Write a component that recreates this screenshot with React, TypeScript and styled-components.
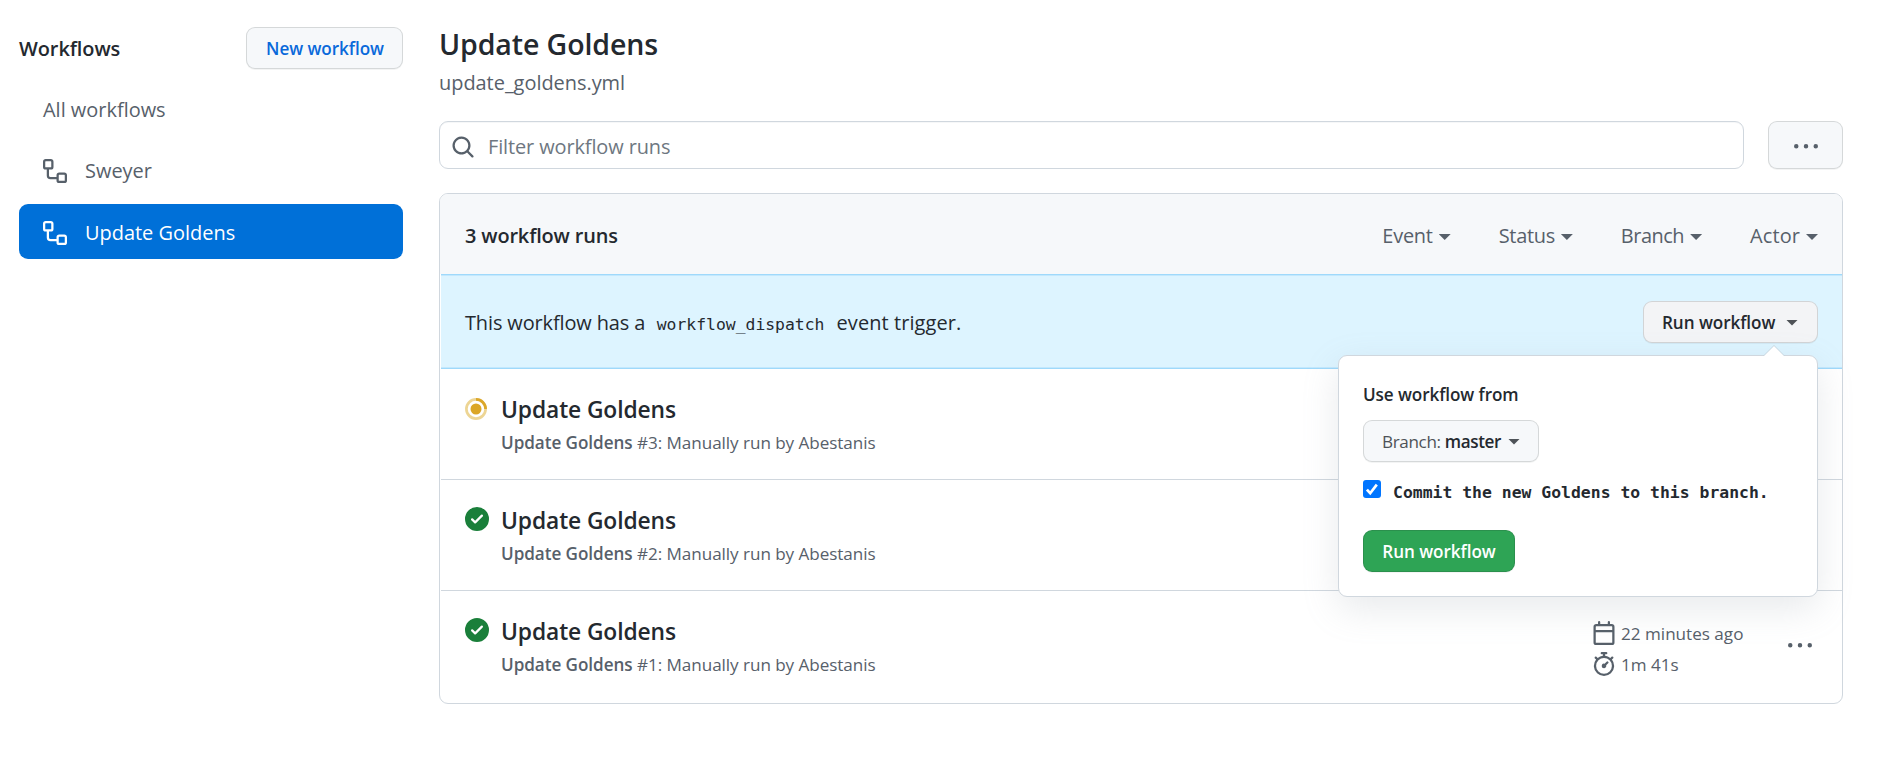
import React from "react";
import styled, { createGlobalStyle, css } from "styled-components";

const GlobalStyle = createGlobalStyle`
  *, *::before, *::after { box-sizing: border-box; }
  body {
    margin: 0;
    background: #fff;
    color: #24292f;
    font: 400 19.95px/27px "Open Sans", "Noto Sans", sans-serif;
    letter-spacing: -0.05px;
  }
  button { font: inherit; letter-spacing: inherit; color: inherit; margin: 0; }
  h1, h2, h3, p { margin: 0; }
`;

const muted = "#57606a";
const line = "#d0d7de";

/* ---------- icons ---------- */

const paths = {
  workflow:
    "M0 1.75C0 .784.784 0 1.75 0h3.5C6.216 0 7 .784 7 1.75v3.5A1.75 1.75 0 015.25 7H4v4a1 1 0 001 1h4v-1.25C9 9.784 9.784 9 10.75 9h3.5c.966 0 1.75.784 1.75 1.75v3.5A1.75 1.75 0 0114.25 16h-3.5A1.75 1.75 0 019 14.25v-.75H5A2.5 2.5 0 012.5 11V7h-.75A1.75 1.75 0 010 5.25v-3.5zm1.75-.25a.25.25 0 00-.25.25v3.5c0 .138.112.25.25.25h3.5a.25.25 0 00.25-.25v-3.5a.25.25 0 00-.25-.25h-3.5zm9 9a.25.25 0 00-.25.25v3.5c0 .138.112.25.25.25h3.5a.25.25 0 00.25-.25v-3.5a.25.25 0 00-.25-.25h-3.5z",
  search:
    "M11.5 7a4.499 4.499 0 11-8.998 0A4.499 4.499 0 0111.5 7zm-.82 4.74a6 6 0 111.06-1.06l3.04 3.04a.75.75 0 11-1.06 1.06l-3.04-3.04z",
  calendar:
    "M4.75 0a.75.75 0 01.75.75V2h5V.75a.75.75 0 011.5 0V2h1.25c.966 0 1.75.784 1.75 1.75v10.5A1.75 1.75 0 0113.25 16H2.75A1.75 1.75 0 011 14.25V3.75C1 2.784 1.784 2 2.75 2H4V.75A.75.75 0 014.75 0zm0 3.5h-2a.25.25 0 00-.25.25V6h11V3.75a.25.25 0 00-.25-.25H4.75zM2.5 7.5v6.75c0 .138.112.25.25.25h10.5a.25.25 0 00.25-.25V7.5h-11z",
  stopwatch:
    "M5.75.75A.75.75 0 016.5 0h3a.75.75 0 010 1.5h-.75v1l-.001.041a6.718 6.718 0 013.464 1.435l.007-.006.75-.75a.75.75 0 111.06 1.06l-.75.75-.006.007a6.75 6.75 0 11-10.548 0L2.72 5.03l-.75-.75a.75.75 0 011.06-1.06l.75.75.007.006A6.718 6.718 0 017.25 2.541a.756.756 0 010-.041v-1H6.5a.75.75 0 01-.75-.75zM8 14.5A5.25 5.25 0 108 4a5.25 5.25 0 000 10.5zm.389-6.7l1.33-1.33a.75.75 0 111.061 1.06L9.45 8.861A1.502 1.502 0 018 10.75a1.5 1.5 0 11.389-2.95z",
  success:
    "M8 16A8 8 0 108 0a8 8 0 000 16zm3.78-9.72a.75.75 0 00-1.06-1.06L6.75 9.19 5.28 7.72a.75.75 0 00-1.06 1.06l2 2a.75.75 0 001.06 0l4.5-4.5z",
  kebab:
    "M8 9a1.5 1.5 0 100-3 1.5 1.5 0 000 3zM1.5 9a1.5 1.5 0 100-3 1.5 1.5 0 000 3zm13 0a1.5 1.5 0 100-3 1.5 1.5 0 000 3z",
};

const Svg = styled.svg`
  display: block;
  flex: none;
  fill: currentColor;
`;

const Icon = ({ name }: { name: keyof typeof paths }) => (
  <Svg width="24" height="24" viewBox="0 0 16 16" aria-hidden="true">
    <path fillRule="evenodd" d={paths[name]} />
  </Svg>
);

const InProgress = () => (
  <Svg width="24" height="24" viewBox="0 0 24 24" aria-hidden="true">
    <circle cx="11" cy="12" r="9.6" fill="none" stroke="#dbab2a" strokeOpacity="0.5" strokeWidth="2.7" />
    <path d="M11 2.4a9.6 9.6 0 019.6 9.6" fill="none" stroke="#dba72a" strokeWidth="2.7" />
    <circle cx="11" cy="12" r="5.5" fill="#dba626" />
  </Svg>
);

const Caret = styled.span`
  flex: none;
  width: 12px;
  height: 6px;
  background: currentColor;
  clip-path: polygon(0 0, 100% 0, 50% 100%);
`;

/* ---------- page ---------- */

const Page = styled.div`
  display: grid;
  grid-template-columns: 384px 1404px;
  column-gap: 36px;
  width: 1883px;
  height: 767px;
  padding: 25px 40px 0 19px;
  align-items: start;
  overflow: hidden;
`;

const Button = styled.button<{ $width: number; $tone?: "link" | "pressed" | "primary" }>`
  display: flex;
  align-items: center;
  justify-content: center;
  width: ${(p) => p.$width}px;
  height: 42px;
  padding: 1px 0 0;
  border: 1px solid rgba(27, 31, 36, 0.15);
  border-radius: 9px;
  background: #f6f8fa;
  box-shadow: 0 1px 0 rgba(27, 31, 36, 0.05);
  font-size: 17.1px;
  font-weight: 600;
  line-height: 23px;
  ${(p) => p.$tone === "link" && css`color: #0969da; padding-left: 1px;`}
  ${(p) => p.$tone === "pressed" && css`background: #f3f4f6;`}
  ${(p) => p.$tone === "primary" && css`background: #2ea455; color: #fff;`}
`;

const MenuButton = styled(Button)`
  justify-content: space-between;
  padding: 1px 19px 0 18px;
  ${Caret} { opacity: 0.8; }
`;

const BranchButton = styled(MenuButton)`
  padding-right: 18px;
`;

/* ---------- sidebar ---------- */

const SideHead = styled.div`
  display: flex;
  align-items: center;
  justify-content: space-between;
  margin-top: 2px;
`;

const SideTitle = styled.h2`
  padding-top: 1px;
  font-size: 19.95px;
  line-height: 27px;
  font-weight: 600;
  letter-spacing: -0.08px;
`;

const SideNav = styled.nav`
  display: flex;
  flex-direction: column;
  gap: 6px;
  margin-top: 13px;
`;

const NavItem = styled.a<{ $active?: boolean }>`
  display: flex;
  align-items: center;
  gap: 18px;
  height: 55px;
  padding: ${(p) => (p.$active ? "2px" : "0")} 24px 0;
  border-radius: 9px;
  color: ${(p) => (p.$active ? "#fff" : muted)};
  background: ${(p) => (p.$active ? "#0070d8" : "transparent")};
  letter-spacing: 0;
`;

/* ---------- main column ---------- */

const Title = styled.h1`
  font-size: 28.5px;
  line-height: 38px;
  font-weight: 600;
  letter-spacing: -0.1px;
`;

const FileName = styled.p`
  margin-top: 6px;
  color: ${muted};
  letter-spacing: -0.02px;
`;

const SearchBar = styled.div`
  display: flex;
  gap: 24px;
  margin-top: 25px;
`;

const SearchField = styled.label`
  display: flex;
  flex: 1;
  align-items: flex-start;
  gap: 13px;
  height: 48px;
  padding: 11px;
  border: 1px solid ${line};
  border-radius: 9px;
  box-shadow: inset 0 1px 0 rgba(208, 215, 222, 0.2);
  color: ${muted};
  svg { margin-top: 2px; }
`;

const Placeholder = styled.span`
  color: #6e7781;
  letter-spacing: -0.11px;
`;

const MoreButton = styled(Button)`
  height: 48px;
  padding-top: 3px;
  color: ${muted};
`;

const RunsBox = styled.section`
  margin-top: 24px;
  padding-bottom: 2px;
  border: 1px solid ${line};
  border-radius: 9px;
`;

const RunsHead = styled.header`
  display: flex;
  justify-content: space-between;
  height: 80px;
  padding: 28px 24px 0 25px;
  border-radius: 8px 8px 0 0;
  background: #f6f8fa;
`;

const Count = styled.h3`
  font-size: 19.95px;
  line-height: 27px;
  font-weight: 600;
  letter-spacing: -0.15px;
`;

const Filters = styled.div`
  display: flex;
  gap: 48px;
  color: ${muted};
`;

const Filter = styled.span<{ $tracking: number }>`
  display: flex;
  align-items: center;
  gap: 6px;
  height: 27px;
  letter-spacing: ${(p) => p.$tracking}px;
  ${Caret} { margin-top: 3px; }
`;

const Banner = styled.div`
  display: flex;
  align-items: flex-start;
  justify-content: space-between;
  height: 95px;
  margin-left: 1px;
  padding: 27px 24px 0;
  background: #ddf4ff;
  box-shadow: inset 0 1px #9fd9fb, inset 0 2px #c3e8fd, inset 0 -1px #9fd9fb, inset 0 -2px #c3e8fd;
`;

const BannerText = styled.p`
  padding-top: 8px;
  letter-spacing: -0.12px;
`;

const Code = styled.code`
  padding: 0 7px 0 6.5px;
  font: 16.4px/20px "DejaVu Sans Mono", monospace;
  letter-spacing: 0;
`;

const Tail = styled.span`
  letter-spacing: 0.1px;
`;

const RunMenu = styled.div`
  position: relative;
`;

const Popover = styled.div`
  position: absolute;
  z-index: 2;
  top: 54px;
  right: 0;
  width: 480px;
  height: 242px;
  padding: 27px 24px 24px;
  border: 1px solid ${line};
  border-radius: 9px;
  background: #fff;
  box-shadow: 0 12px 36px rgba(140, 149, 159, 0.2);

  &::before, &::after {
    content: "";
    position: absolute;
    border: solid transparent;
  }
  &::before {
    top: -11px;
    right: 32px;
    border-width: 0 11px 11px;
    border-bottom-color: #c5d5df;
  }
  &::after {
    top: -10px;
    right: 32px;
    border-width: 0 11px 11px;
    border-bottom-color: #fff;
  }
`;

const FieldLabel = styled.p`
  margin-bottom: 14px;
  font-size: 17.1px;
  line-height: 23px;
  font-weight: 600;
  letter-spacing: -0.08px;
`;

const BranchLabel = styled.span`
  letter-spacing: -0.36px;
  i {
    font-style: normal;
    font-weight: 400;
    opacity: 0.8;
  }
`;

const CheckRow = styled.div`
  display: flex;
  gap: 12px;
  margin: 18px 0 25px;
  height: 25px;
  font: 700 16.4px/25px "DejaVu Sans Mono", monospace;
  letter-spacing: 0.02px;
  white-space: nowrap;
`;

const CheckBox = styled.span`
  display: flex;
  flex: none;
  width: 18px;
  height: 18px;
  border-radius: 3px;
  background: #0075ff;
`;

const Run = styled.article`
  display: flex;
  align-items: flex-start;
  margin-left: 1px;
  padding: 25px 30px 25px 24px;
  & + & { border-top: 1px solid ${line}; }
`;

const RunState = styled.span<{ $ok: boolean }>`
  margin: ${(p) => (p.$ok ? 2 : 3)}px 12px 0 0;
  color: #1a7f3a;
`;

const RunBody = styled.div`
  flex: 1;
`;

const RunTitle = styled.h3`
  font-size: 22.8px;
  line-height: 31px;
  font-weight: 600;
  letter-spacing: -0.1px;
`;

const RunMeta = styled.p`
  margin-top: 6px;
  font-size: 17.1px;
  line-height: 23px;
  color: ${muted};
  b { font-weight: 600; }
`;

const Times = styled.div`
  display: flex;
  flex-direction: column;
  gap: 7px;
  width: 196px;
  margin-top: 5px;
  color: ${muted};
`;

const Time = styled.span`
  display: flex;
  align-items: flex-start;
  gap: 5px;
  height: 24px;
  font-size: 17.1px;
  line-height: 25px;
  letter-spacing: 0;
`;

const RunMore = styled.span`
  margin-top: 18px;
  color: ${muted};
`;

const filters: [string, number][] = [
  ["Event", -0.24],
  ["Status", -0.3],
  ["Branch", -0.48],
  ["Actor", 0.1],
];

const runs = [
  { id: 3, ok: false },
  { id: 2, ok: true },
  { id: 1, ok: true, started: "22 minutes ago", took: "1m 41s" },
];

export default function App() {
  return (
    <>
      <GlobalStyle />
      <Page>
        <aside>
          <SideHead>
            <SideTitle>Workflows</SideTitle>
            <Button $width={157} $tone="link">New workflow</Button>
          </SideHead>
          <SideNav>
            <NavItem>All workflows</NavItem>
            <NavItem><Icon name="workflow" />Sweyer</NavItem>
            <NavItem $active><Icon name="workflow" />Update Goldens</NavItem>
          </SideNav>
        </aside>

        <main>
          <Title>Update Goldens</Title>
          <FileName>update_goldens.yml</FileName>
          <SearchBar>
            <SearchField>
              <Icon name="search" />
              <Placeholder>Filter workflow runs</Placeholder>
            </SearchField>
            <MoreButton $width={75}><Icon name="kebab" /></MoreButton>
          </SearchBar>

          <RunsBox>
            <RunsHead>
              <Count>3 workflow runs</Count>
              <Filters>
                {filters.map(([label, tracking]) => (
                  <Filter key={label} $tracking={tracking}>{label}<Caret /></Filter>
                ))}
              </Filters>
            </RunsHead>

            <Banner>
              <BannerText>
                This workflow has a <Code>workflow_dispatch</Code> <Tail>event trigger.</Tail>
              </BannerText>
              <RunMenu>
                <MenuButton $width={175} $tone="pressed">Run workflow<Caret /></MenuButton>
                <Popover>
                  <FieldLabel>Use workflow from</FieldLabel>
                  <BranchButton $width={176}>
                    <BranchLabel><i>Branch:</i> master</BranchLabel>
                    <Caret />
                  </BranchButton>
                  <CheckRow>
                    <CheckBox>
                      <Svg width="18" height="18" viewBox="0 0 18 18">
                        <path d="M3.9 9.6l3.3 3.6 6.6-8.6" fill="none" stroke="#fff" strokeWidth="2.7" />
                      </Svg>
                    </CheckBox>
                    Commit the new Goldens to this branch.
                  </CheckRow>
                  <Button $width={152} $tone="primary">Run workflow</Button>
                </Popover>
              </RunMenu>
            </Banner>

            {runs.map((run) => (
              <Run key={run.id}>
                <RunState $ok={run.ok}>{run.ok ? <Icon name="success" /> : <InProgress />}</RunState>
                <RunBody>
                  <RunTitle>Update Goldens</RunTitle>
                  <RunMeta><b>Update Goldens</b> #{run.id}: Manually run by Abestanis</RunMeta>
                </RunBody>
                {run.started && (
                  <>
                    <Times>
                      <Time><Icon name="calendar" />{run.started}</Time>
                      <Time><Icon name="stopwatch" />{run.took}</Time>
                    </Times>
                    <RunMore><Icon name="kebab" /></RunMore>
                  </>
                )}
              </Run>
            ))}
          </RunsBox>
        </main>
      </Page>
    </>
  );
}
